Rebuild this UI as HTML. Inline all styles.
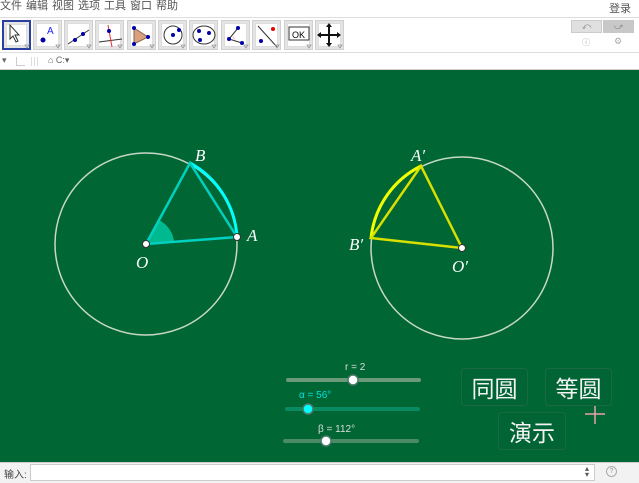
<!DOCTYPE html><html><head><meta charset="utf-8"><style>
*{margin:0;padding:0;box-sizing:border-box}
body{width:639px;height:483px;overflow:hidden;background:#fff;font-family:"Liberation Sans","Noto Sans CJK SC",sans-serif;position:relative}
.menu{position:absolute;top:0;left:0;height:15px;font-size:11px;color:#555;line-height:13px}
.menu span{margin-right:4px}
.tb{position:absolute;top:20px;width:29px;height:30px;border:1px solid #d0d0d0;background:#e4e4e4}
.tb i{position:absolute;inset:2px;background:#fff;border:1px solid #ddd}
.abs{position:absolute}
.btn{position:absolute;border:1px solid #1a6a40;border-radius:4px;background:#016434;color:#f4f4f4;font-size:23px;font-family:"Noto Sans CJK SC",sans-serif;text-align:center;line-height:36px}
</style></head><body>
<div class="menu"><span>文件</span><span>编辑</span><span>视图</span><span>选项</span><span>工具</span><span>窗口</span><span>帮助</span></div>
<div class="abs" style="right:8px;top:0;font-size:11px;color:#555">登录</div>
<div class="abs" style="top:17px;left:0;width:639px;height:1px;background:#ddd"></div>
<div class="tb" style="left:2px;border:2px solid #2a3f9e"><i></i></div>
<div class="tb" style="left:33px"><i></i></div><div class="tb" style="left:64px"><i></i></div><div class="tb" style="left:95px"><i></i></div><div class="tb" style="left:127px"><i></i></div><div class="tb" style="left:158px"><i></i></div><div class="tb" style="left:189px"><i></i></div><div class="tb" style="left:221px"><i></i></div><div class="tb" style="left:252px"><i></i></div><div class="tb" style="left:284px"><i></i></div><div class="tb" style="left:315px"><i></i></div>
<svg class="abs" style="left:0;top:17px" width="350" height="36">
<path d="M10 8 L10 22 L13 19 L16 25 L18 24 L15 18 L19 18 Z" fill="#fff" stroke="#333"/>
<circle cx="43" cy="23" r="2.5" fill="#00a"/><text x="47" y="17" font-size="10" fill="#22f">A</text>
<line x1="68" y1="27" x2="89" y2="13" stroke="#333"/><circle cx="75" cy="23" r="2" fill="#00a"/><circle cx="83" cy="17" r="2" fill="#00a"/>
<line x1="99" y1="25" x2="122" y2="22" stroke="#333"/><line x1="108" y1="8" x2="112" y2="30" stroke="#e33"/><circle cx="109" cy="14" r="2" fill="#00a"/>
<path d="M134 11 L148 20 L134 27Z" fill="#d9a080" stroke="#864"/><circle cx="134" cy="11" r="2" fill="#00a"/><circle cx="148" cy="20" r="2" fill="#00a"/><circle cx="134" cy="27" r="2" fill="#00a"/>
<circle cx="173" cy="18" r="9" fill="none" stroke="#333"/><circle cx="173" cy="18" r="2" fill="#00a"/><circle cx="179" cy="13" r="2" fill="#00a"/>
<ellipse cx="204" cy="18" rx="11" ry="9" fill="none" stroke="#333"/><circle cx="199" cy="14" r="2" fill="#00a"/><circle cx="209" cy="16" r="2" fill="#00a"/><circle cx="200" cy="23" r="2" fill="#00a"/>
<path d="M238 11 L229 22 L242 26" fill="none" stroke="#333"/><path d="M232 19 A5 5 0 0 1 235 23Z" fill="#f99"/><circle cx="229" cy="22" r="2" fill="#00a"/><circle cx="238" cy="11" r="2" fill="#00a"/><circle cx="242" cy="26" r="2" fill="#00a"/>
<line x1="258" y1="9" x2="277" y2="30" stroke="#333"/><circle cx="261" cy="24" r="2" fill="#00a"/><circle cx="273" cy="12" r="2" fill="#e00"/>
<rect x="289" y="10" width="20" height="13" fill="#fff" stroke="#333"/><text x="292" y="21" font-size="9">OK</text>
<path d="M329 9 V27 M320 18 H338" stroke="#111" stroke-width="2"/><path d="M329 6 l-3 4 h6z M329 30 l-3 -4 h6z M317 18 l4 -3 v6z M341 18 l-4 -3 v6z" fill="#111"/>
<g fill="none" stroke="#999" stroke-width="0.8"><path d="M25 28 l2 3 l2 -3z M56 28 l2 3 l2 -3z M87 28 l2 3 l2 -3z M118 28 l2 3 l2 -3z M150 28 l2 3 l2 -3z M181 28 l2 3 l2 -3z M212 28 l2 3 l2 -3z M244 28 l2 3 l2 -3z M275 28 l2 3 l2 -3z M307 28 l2 3 l2 -3z M338 28 l2 3 l2 -3z"/></g>
</svg>
<div class="abs" style="left:571px;top:20px;width:31px;height:13px;background:#e0e0e0;border:1px solid #ccc;font-size:9px;color:#888;text-align:center;line-height:11px">⤺</div>
<div class="abs" style="left:603px;top:20px;width:31px;height:13px;background:#c8c8c8;font-size:9px;color:#888;text-align:center;line-height:12px">⤻</div>
<div class="abs" style="left:582px;top:37px;font-size:8px;color:#aaa">ⓘ</div>
<div class="abs" style="left:614px;top:36px;font-size:9px;color:#aaa">⚙</div>
<div class="abs" style="top:52px;left:0;width:639px;height:1px;background:#ddd"></div>
<div class="abs" style="left:2px;top:55px;font-size:9px;color:#666">▾</div>
<div class="abs" style="left:16px;top:57px;width:9px;height:9px;border-left:1px solid #ccc;border-bottom:1px solid #ccc"></div>
<div class="abs" style="left:31px;top:57px;width:9px;height:9px;background:repeating-linear-gradient(90deg,#ddd 0 1px,transparent 1px 3px)"></div>
<div class="abs" style="left:48px;top:55px;font-size:9px;color:#666">⌂ C:▾</div>
<div class="abs" style="top:69px;left:0;width:639px;height:393px;background:#006633;border-top:1px solid #ccc"></div>
<svg class="abs" style="left:0;top:0" width="639" height="483">
<circle cx="146" cy="244" r="91" fill="none" stroke="#c8d8c8" stroke-width="1.5"/>
<path d="M146 244 L174 241 A28 28 0 0 0 159 220 Z" fill="#00c8a0" opacity="0.85"/>
<path d="M237 237 A91 91 0 0 0 190 163" fill="none" stroke="#00ffff" stroke-width="3"/>
<path d="M146 244 L237 237 L190 163 Z" fill="none" stroke="#00d0c0" stroke-width="2.5"/>
<circle cx="146" cy="244" r="3.5" fill="#fff" stroke="#333"/><circle cx="237" cy="237" r="3.5" fill="#fff" stroke="#333"/>
<g font-family="Liberation Serif" font-style="italic" font-size="17" fill="#fff">
<text x="195" y="161">B</text><text x="247" y="241">A</text><text x="136" y="268">O</text>
<text x="411" y="161">A′</text><text x="349" y="250">B′</text><text x="452" y="272">O′</text></g>
<circle cx="462" cy="248" r="91" fill="none" stroke="#c8d8c8" stroke-width="1.5"/>
<path d="M421 166 A91 91 0 0 0 371 238" fill="none" stroke="#eeff00" stroke-width="3"/>
<path d="M462 248 L421 166 L371 238 Z" fill="none" stroke="#d8e000" stroke-width="2.5"/>
<circle cx="462" cy="248" r="3.5" fill="#fff" stroke="#333"/>
<line x1="288" y1="380" x2="419" y2="380" stroke="#6a9a7a" stroke-width="4" stroke-linecap="round"/>
<circle cx="353" cy="380" r="5" fill="#fff" stroke="#4a7a6a" stroke-width="1.5"/>
<line x1="287" y1="409" x2="418" y2="409" stroke="#0a8a60" stroke-width="4" stroke-linecap="round"/>
<circle cx="308" cy="409" r="5" fill="#00ffff" stroke="#4a7a6a" stroke-width="1.5"/>
<line x1="285" y1="441" x2="417" y2="441" stroke="#4a8a66" stroke-width="4" stroke-linecap="round"/>
<circle cx="326" cy="441" r="5" fill="#fff" stroke="#4a7a6a" stroke-width="1.5"/>
<g font-size="10" fill="#ddd" font-family="Liberation Sans"><text x="345" y="370">r = 2</text><text x="299" y="398" fill="#00e0e0">α = 56°</text><text x="318" y="432">β = 112°</text></g>
<path d="M595 404 V424 M585 414 H605" stroke="#e8a0b0" stroke-width="1.5"/>
</svg>
<div class="btn" style="left:461px;top:368px;width:67px;height:38px">同圆</div>
<div class="btn" style="left:545px;top:368px;width:67px;height:38px">等圆</div>
<div class="btn" style="left:498px;top:412px;width:68px;height:38px">演示</div>
<div class="abs" style="top:462px;left:0;width:639px;height:21px;background:#f2f2f2;border-top:1px solid #ccc"></div>
<div class="abs" style="left:4px;top:466px;font-size:10px;color:#444">输入:</div>
<div class="abs" style="left:30px;top:464px;width:565px;height:17px;background:#fff;border:1px solid #ccc"></div>
<div class="abs" style="left:585px;top:466px;font-size:8px;color:#555;line-height:6px">▴<br>▾</div>
<div class="abs" style="left:606px;top:466px;width:11px;height:11px;border:1px solid #aaa;border-radius:50%;font-size:7px;color:#999;text-align:center;line-height:9px">?</div>
</body></html>
